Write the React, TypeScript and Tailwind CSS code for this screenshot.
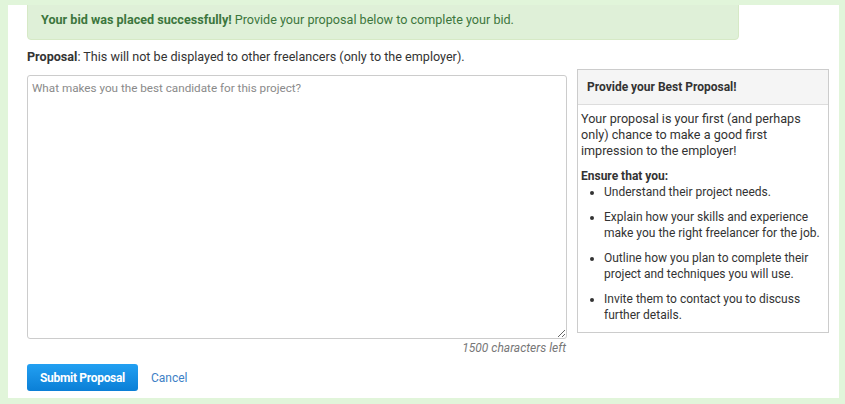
import React from "react";

const tips = [
  "Understand their project needs.",
  "Explain how your skills and experience make you the right freelancer for the job.",
  "Outline how you plan to complete their project and techniques you will use.",
  "Invite them to contact you to discuss further details.",
];

const App = () => {
  return (
    <div className="w-[845px] h-[404px] bg-[#e1f5da] pl-[8px] pt-[5px] pr-[6px] pb-[6px] font-['Roboto',sans-serif] text-[#333]">
      <div className="bg-white h-full pl-[19px] pr-[10px] overflow-hidden">
        {/* alert */}
        <div className="-mt-[5px] w-[712px] h-[40px] bg-[#dff0d8] border border-[#d6e9c6] rounded-b-[4px] flex items-center pl-[13px] text-[12.6px] text-[#3c763d]">
          <span className="font-bold">Your bid was placed successfully!</span>
          <span>&nbsp;Provide your proposal below to complete your bid.</span>
        </div>

        <p className="mt-[9px] text-[12.6px] leading-[16px]">
          <span className="font-bold">Proposal</span>: This will not be displayed to other freelancers (only to the employer).
        </p>

        <div className="mt-[4px] flex items-start gap-[10px]">
          <div className="w-[540px]">
            <textarea
              className="mt-[6px] block w-[540px] h-[264px] border border-[#ccc] rounded-[3px] px-[4px] py-[4px] text-[11.7px] leading-[16px] placeholder:text-[#8a8a8a] outline-none"
              placeholder="What makes you the best candidate for this project?"
            />
            <p className="text-right italic text-[12px] leading-[16px] text-[#777] pt-[1px] pr-[1px]">1500 characters left</p>
            <div className="mt-[8px] flex items-center gap-[13px]">
              <button className="h-[27px] w-[111px] rounded-[3px] bg-gradient-to-b from-[#22a0f2] to-[#0a7fd6] text-white text-[12px] font-bold tracking-[-0.3px]">
                Submit Proposal
              </button>
              <a className="text-[12px] text-[#3d7fc6]">Cancel</a>
            </div>
          </div>

          <div className="w-[252px] border border-[#ccc]">
            <div className="h-[35px] bg-[#f5f5f5] border-b border-[#ddd] flex items-center pl-[9px] text-[12px] font-bold">
              Provide your Best Proposal!
            </div>
            <div className="px-[3px] pt-[6px] pb-0 text-[12.6px] leading-[16px]">
              <p>Your proposal is your first (and perhaps only) chance to make a good first impression to the employer!</p>
              <p className="mt-[10px] font-bold text-[12px] leading-[15px]">Ensure that you:</p>
              <ul className="list-disc pl-[23px] text-[12px] leading-[16px]">
                {tips.map((t) => (
                  <li key={t} className="mb-[9px]">{t}</li>
                ))}
              </ul>
            </div>
          </div>
        </div>
      </div>
    </div>
  );
};

export default App;
